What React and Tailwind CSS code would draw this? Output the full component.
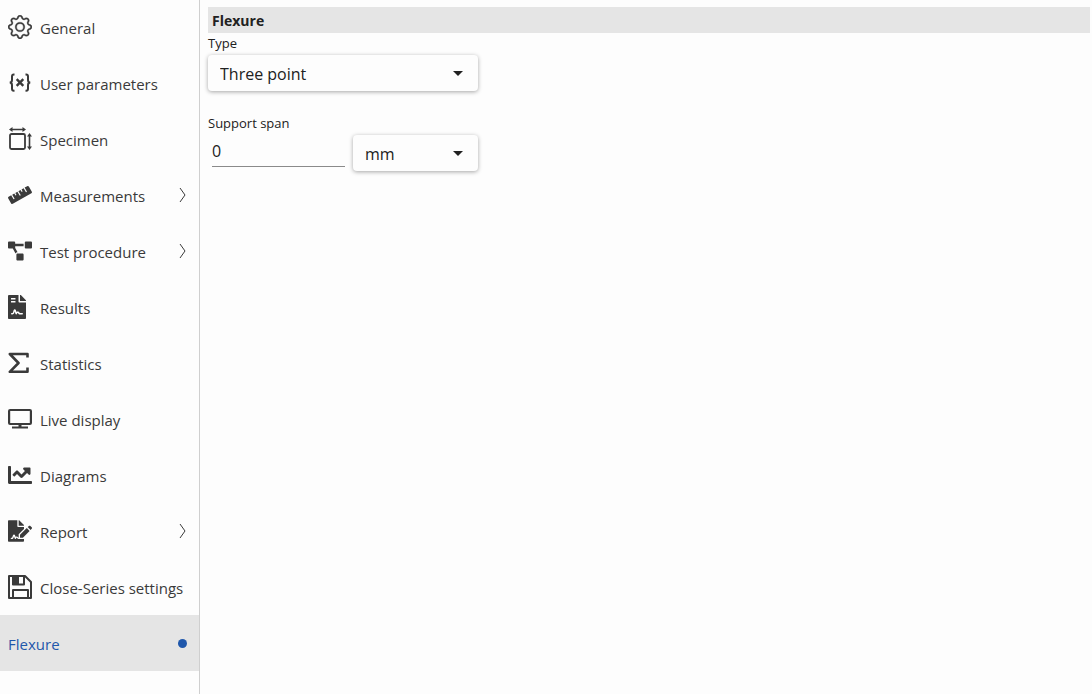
import { useState } from 'react';
import { BsGear } from 'react-icons/bs';
import { FaChartLine, FaFileContract, FaFileSignature, FaProjectDiagram, FaRuler } from 'react-icons/fa';

const VariableIcon = () => (
  <svg viewBox="0 0 24 24" className="size-6" fill="none" stroke="currentColor" strokeWidth="2">
    <path d="M6.5 3.5h-.7c-1.4 0-1.8.8-1.8 2V9c0 1.6-.6 2.6-2.3 2.6 1.7 0 2.3 1 2.3 2.6v3.5c0 1.2.4 2 1.8 2h.7" />
    <path d="M17.5 3.5h.7c1.4 0 1.8.8 1.8 2V9c0 1.6.6 2.6 2.3 2.6-1.7 0-2.3 1-2.3 2.6v3.5c0 1.2-.4 2-1.8 2h-.7" />
    <path d="M8.7 8.2l6.6 6.6M15.3 8.2l-6.6 6.6" strokeWidth="2.4" />
  </svg>
);

const SpecimenIcon = () => (
  <svg viewBox="0 0 24 24" className="size-6" fill="none" stroke="currentColor">
    <rect x="2" y="7" width="15" height="15" rx="1.5" strokeWidth="1.8" />
    <path d="M3 2.5h13M21.5 8v13" strokeWidth="1.6" />
    <path d="M1 2.5L4.5 0v5zM18 2.5L14.5 0v5zM21.5 6L19 9.5h5zM21.5 23L19 19.5h5z" fill="currentColor" stroke="none" />
  </svg>
);

const SigmaIcon = () => (
  <svg viewBox="0 0 24 24" className="size-6" fill="none" stroke="currentColor" strokeWidth="2.6" strokeLinejoin="round">
    <path d="M19.5 6.500V3H1.800l8.700 9-8.700 8.800h17.700v-4.300" />
  </svg>
);

const DisplayIcon = () => (
  <svg viewBox="0 0 24 24" className="size-6" fill="none" stroke="currentColor" strokeWidth="2.2">
    <rect x="1.1" y="3" width="21.8" height="14" rx="1" />
    <path d="M4 20.5h16" strokeWidth="2" />
    <path d="M12 17v3" strokeWidth="3" />
  </svg>
);

const SaveIcon = () => (
  <svg viewBox="0 0 24 24" className="size-6" fill="none" stroke="currentColor" strokeWidth="2" strokeLinejoin="round">
    <path d="M1 1h16l6 6v16H1z" />
    <path d="M5 1v8.500h11V1M5 23v-8h15v8" />
    <path d="M5 1h5v8H5z" fill="currentColor" />
  </svg>
);

const ChevronIcon = () => (
  <svg viewBox="0 0 8 16" className="h-4 w-2" fill="none" stroke="currentColor" strokeWidth="1">
    <path d="M1 1l5 7-5 7" />
  </svg>
);

const items = [
  { label: 'General', icon: <BsGear className="size-6" strokeWidth="0.2" /> },
  { label: 'User parameters', icon: <VariableIcon /> },
  { label: 'Specimen', icon: <SpecimenIcon /> },
  { label: 'Measurements', icon: <FaRuler className="size-6" />, expandable: true },
  { label: 'Test procedure', icon: <FaProjectDiagram className="size-6" />, expandable: true },
  { label: 'Results', icon: <FaFileContract className="h-6 w-[18px]" /> },
  { label: 'Statistics', icon: <SigmaIcon /> },
  { label: 'Live display', icon: <DisplayIcon /> },
  { label: 'Diagrams', icon: <FaChartLine className="size-6" /> },
  { label: 'Report', icon: <FaFileSignature className="size-6" />, expandable: true },
  { label: 'Close-Series settings', icon: <SaveIcon /> },
  { label: 'Flexure' }
];

function Dropdown({ id, label, value, onChange, options, className }) {
  return (
    <div className={`relative rounded-sm bg-[#fdfdfd] shadow-[0_1px_4px_rgba(0,0,0,0.35)] ${className}`}>
      <select
        id={id}
        aria-label={label}
        value={value}
        onChange={e => onChange(e.target.value)}
        className="block h-9 w-full appearance-none bg-transparent pt-0.5 pr-8 pl-3 text-[16px]"
      >
        {options.map(option => <option key={option}>{option}</option>)}
      </select>
      <svg viewBox="0 0 10 5" className="pointer-events-none absolute top-4 right-[15px] h-[5px] w-[10px]">
        <path d="M0 0h10L5 5z" fill="currentColor" />
      </svg>
    </div>
  );
}

export default function App() {
  const [active, setActive] = useState('Flexure');
  const [type, setType] = useState('Three point');
  const [span, setSpan] = useState('0');
  const [unit, setUnit] = useState('mm');

  return (
    <div className="flex min-h-screen bg-[#fdfdfd] font-['Open_Sans','Noto_Sans',sans-serif] text-[#212121]">
      {/* Sidebar */}
      <nav className="-mt-px w-[200px] shrink-0 border-r border-[#cfcfcf] text-[15px] text-[#3a3a3a]">
        {items.map(item => (
          <button
            key={item.label}
            type="button"
            onClick={() => setActive(item.label)}
            className={`flex h-14 w-full items-center px-2 text-left whitespace-nowrap ${active === item.label ? 'bg-[#e5e5e5] text-[#1f57ab]' : ''}`}
          >
            {item.icon && <span className="mr-2 flex w-6 shrink-0">{item.icon}</span>}
            <span className="flex-1 pt-0.5">{item.label}</span>
            {item.expandable && <span className="mr-1"><ChevronIcon /></span>}
            {active === item.label && <span className="mr-1 size-[9px] rounded-full bg-[#1f57ab]" />}
          </button>
        ))}
      </nav>

      {/* Settings */}
      <main className="min-w-0 flex-1 pt-[7px] pr-0.5 pl-2">
        <h1 className="bg-[#e5e5e5] px-1 pt-1 pb-0.5 text-[14px] leading-5 font-bold">Flexure</h1>
        <label htmlFor="type" className="block pb-0.5 text-[13px] leading-5">Type</label>
        <Dropdown id="type" value={type} onChange={setType} options={['Three point', 'Four point']} className="w-[270px]" />

        <label htmlFor="span" className="mt-[22px] block pb-0.5 text-[13px] leading-5">Support span</label>
        <div className="flex w-[270px] items-start gap-2 pl-1">
          <input
            id="span"
            value={span}
            onChange={e => setSpan(e.target.value)}
            className="h-8 min-w-0 flex-1 border-b border-[#8a8a8a] bg-transparent text-[16px] outline-none"
          />
          <Dropdown id="unit" label="Unit" value={unit} onChange={setUnit} options={['mm', 'cm', 'in']} className="w-[125px]" />
        </div>
      </main>
    </div>
  );
}
